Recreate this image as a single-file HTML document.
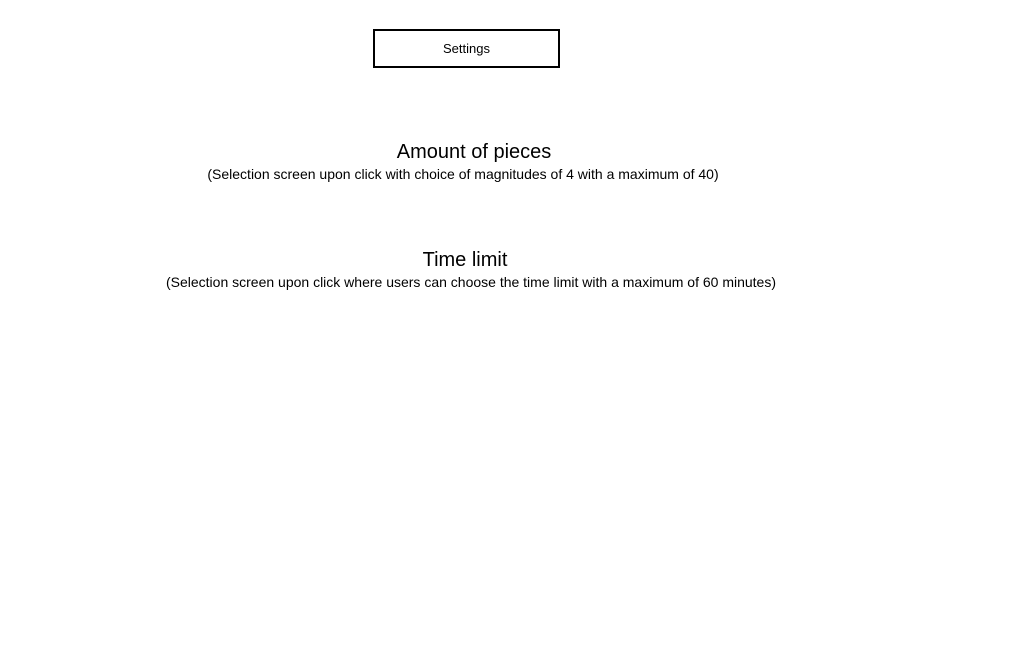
<!DOCTYPE html>
<html><head><style>
body{margin:0;width:1035px;height:657px;background:#fff;font-family:"Liberation Sans",sans-serif;color:#000;position:relative;overflow:hidden}
.box{position:absolute;left:373px;top:29px;width:183px;height:35px;border:2px solid #000;font-size:13px;text-align:center;line-height:36px}
.t{position:absolute;white-space:nowrap;transform:translateX(-50%)}
.h{font-size:20px}
.s{font-size:14px}
</style></head><body>
<div class="box">Settings</div>
<div class="t h" style="left:474px;top:141px">Amount of pieces</div>
<div class="t s" style="left:463px;top:166px">(Selection screen upon click with choice of magnitudes of 4 with a maximum of 40)</div>
<div class="t h" style="left:465px;top:249px">Time limit</div>
<div class="t s" style="left:471px;top:274px">(Selection screen upon click where users can choose the time limit with a maximum of 60 minutes)</div>
</body></html>
